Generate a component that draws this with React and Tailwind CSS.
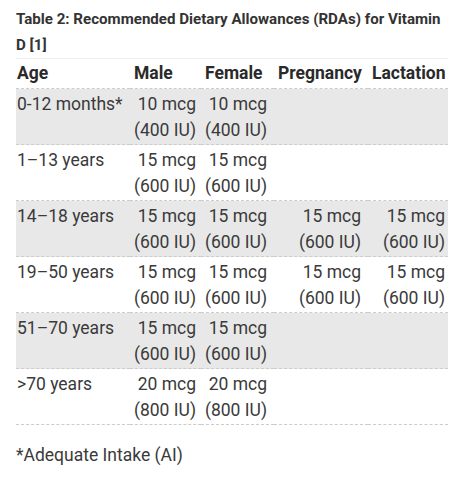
import React from 'react'

const rows = [
  { age: '0-12 months*', male: ['10 mcg', '(400 IU)'], female: ['10 mcg', '(400 IU)'], shade: true },
  { age: '1–13 years', male: ['15 mcg', '(600 IU)'], female: ['15 mcg', '(600 IU)'] },
  {
    age: '14–18 years',
    male: ['15 mcg', '(600 IU)'],
    female: ['15 mcg', '(600 IU)'],
    preg: ['15 mcg', '(600 IU)'],
    lact: ['15 mcg', '(600 IU)'],
    shade: true,
  },
  {
    age: '19–50 years',
    male: ['15 mcg', '(600 IU)'],
    female: ['15 mcg', '(600 IU)'],
    preg: ['15 mcg', '(600 IU)'],
    lact: ['15 mcg', '(600 IU)'],
  },
  { age: '51–70 years', male: ['15 mcg', '(600 IU)'], female: ['15 mcg', '(600 IU)'], shade: true },
  { age: '>70 years', male: ['20 mcg', '(800 IU)'], female: ['20 mcg', '(800 IU)'] },
]

function Val({ v }) {
  if (!v) return null
  return (
    <>
      <div>{v[0]}</div>
      <div>{v[1]}</div>
    </>
  )
}

export default function App() {
  const cell = 'align-top pt-[2px] pb-[1px] text-right whitespace-nowrap'
  return (
    <div className="min-h-[480px] bg-white px-4 text-[#3a3a3a]" style={{ fontFamily: 'Roboto, "Liberation Sans", sans-serif' }}>
      <div className="w-[432px] whitespace-nowrap border-b border-[#eeeeee] pt-[6px] text-[15.1px] font-bold leading-[26px] text-[#333333]">
        Table 2: Recommended Dietary Allowances (RDAs) for Vitamin
        <br />D [1]
      </div>
      <table className="w-[432px] table-fixed border-collapse text-[17.5px] leading-[26px]">
        <colgroup>
          <col className="w-[114px]" />
          <col className="w-[71px]" />
          <col className="w-[73px]" />
          <col className="w-[94px]" />
          <col className="w-[80px]" />
        </colgroup>
        <thead>
          <tr className="border-b border-dashed border-[#cccccc] text-left text-[17.5px] text-[#2a2a2a]">
            <th className="pl-[1px] pt-[1px] pb-[2px] font-bold">Age</th>
            <th className="pl-[4px] pt-[1px] pb-[2px] font-bold">Male</th>
            <th className="pl-[4px] pt-[1px] pb-[2px] font-bold">Female</th>
            <th className="pl-[4px] pt-[1px] pb-[2px] font-bold whitespace-nowrap">Pregnancy</th>
            <th className="pl-[4px] pt-[1px] pb-[2px] font-bold">Lactation</th>
          </tr>
        </thead>
        <tbody>
          {rows.map((r) => (
            <tr key={r.age} className={'border-b border-dashed border-[#cccccc] ' + (r.shade ? 'bg-[#e8e8e8]' : '')}>
              <td className="align-top pl-[1px] pt-[2px] pb-[1px] whitespace-nowrap">{r.age}</td>
              <td className={cell + ' pr-[5px]'}>
                <Val v={r.male} />
              </td>
              <td className={cell + ' pr-[7px]'}>
                <Val v={r.female} />
              </td>
              <td className={cell + ' pr-[7px]'}>
                <Val v={r.preg} />
              </td>
              <td className={cell + ' pr-[3px]'}>
                <Val v={r.lact} />
              </td>
            </tr>
          ))}
        </tbody>
      </table>
      <p className="pt-[17px] text-[17.5px] leading-[26px]">*Adequate Intake (AI)</p>
    </div>
  )
}
